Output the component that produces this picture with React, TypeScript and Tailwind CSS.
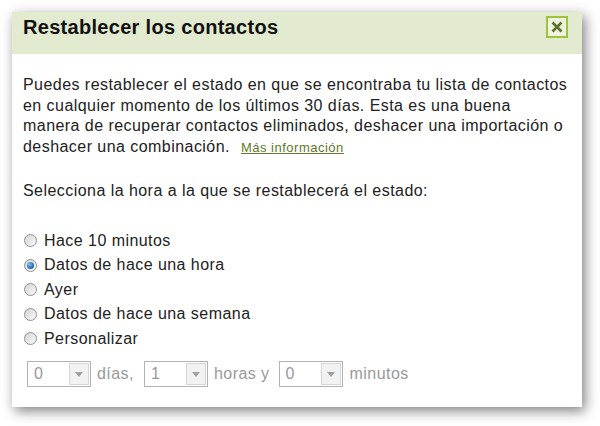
import React from 'react'

const options = [
  { id: 'm10', label: 'Hace 10 minutos' },
  { id: 'h1', label: 'Datos de hace una hora', checked: true },
  { id: 'ayer', label: 'Ayer' },
  { id: 'sem', label: 'Datos de hace una semana' },
  { id: 'custom', label: 'Personalizar' },
]

const Radio = ({ checked }: { checked?: boolean }) => (
  <span className='flex h-[13px] w-[13px] shrink-0 items-center justify-center rounded-full border border-[#8f8f8f] bg-gradient-to-br from-[#d4d4d4] to-[#fbfbfb]'>
    {checked && (
      <span className='h-[7px] w-[7px] rounded-full bg-[radial-gradient(circle_at_35%_35%,#7fc4f4,#1b5fa8_70%,#123f73)]' />
    )}
  </span>
)

const Select = ({ value }: { value: string }) => (
  <div className='flex h-[26px] w-[64px] border border-[#b3b3b3] bg-white'>
    <span className='flex-1 pl-[6px] leading-[24px] text-[#999]'>{value}</span>
    <span className='m-[1px] flex w-[20px] items-center justify-center border border-[#d6d6d6] bg-[#f2f2f2]'>
      <svg width='8' height='5' viewBox='0 0 8 5'>
        <path d='M0 0h8L4 5z' fill='#a0a0a0' />
      </svg>
    </span>
  </div>
)

const App = () => {
  return (
    <div className='h-[426px] w-[600px] bg-white pl-[12px] pt-[12px] font-["Liberation_Sans",Arial,sans-serif]'>
      <div className='h-[395px] w-[570px] bg-white shadow-[3px_4px_12px_rgba(0,0,0,0.5)]'>
        <div className='flex h-[42px] items-start justify-between bg-[#e2eacf] pl-[11px] pr-[14px]'>
          <h1 className='pt-[3px] text-[20px] font-bold leading-[24px] tracking-[0.3px] text-[#111]'>
            Restablecer los contactos
          </h1>
          <button className='mt-[4px] flex h-[22px] w-[22px] items-center justify-center border-2 border-[#9cc33a] bg-[#eef3df]'>
            <svg width='12' height='12' viewBox='0 0 12 12'>
              <path d='M1.5 1.5l9 9M10.5 1.5l-9 9' stroke='#5d7030' strokeWidth='2.6' />
            </svg>
          </button>
        </div>

        <div className='px-[11px] pt-[21px] text-[16px] leading-[20.5px] tracking-[0.45px] text-[#222]'>
          <p className='whitespace-nowrap'>
            Puedes restablecer el estado en que se encontraba tu lista de contactos
            <br />
            en cualquier momento de los últimos 30 días. Esta es una buena
            <br />
            manera de recuperar contactos eliminados, deshacer una importación o
            <br />
            deshacer una combinación.
            <a href='#' className='ml-[11px] text-[13px] tracking-[0.5px] text-[#5f7a2c] underline'>
              Más información
            </a>
          </p>

          <p className='mt-[23px]'>Selecciona la hora a la que se restablecerá el estado:</p>

          <div className='mt-[27px] flex flex-col'>
            {options.map((o) => (
              <label key={o.id} className='flex h-[24.5px] items-center gap-[7px] pl-[1px]'>
                <Radio checked={o.checked} />
                <span>{o.label}</span>
              </label>
            ))}
          </div>

          <div className='mt-[10px] flex items-center pl-[4px] text-[#999]'>
            <Select value='0' />
            <span className='ml-[6px] mr-[10px]'>días,</span>
            <Select value='1' />
            <span className='ml-[6px] mr-[9px]'>horas y</span>
            <Select value='0' />
            <span className='ml-[7px]'>minutos</span>
          </div>
        </div>
      </div>
    </div>
  )
}

export default App
